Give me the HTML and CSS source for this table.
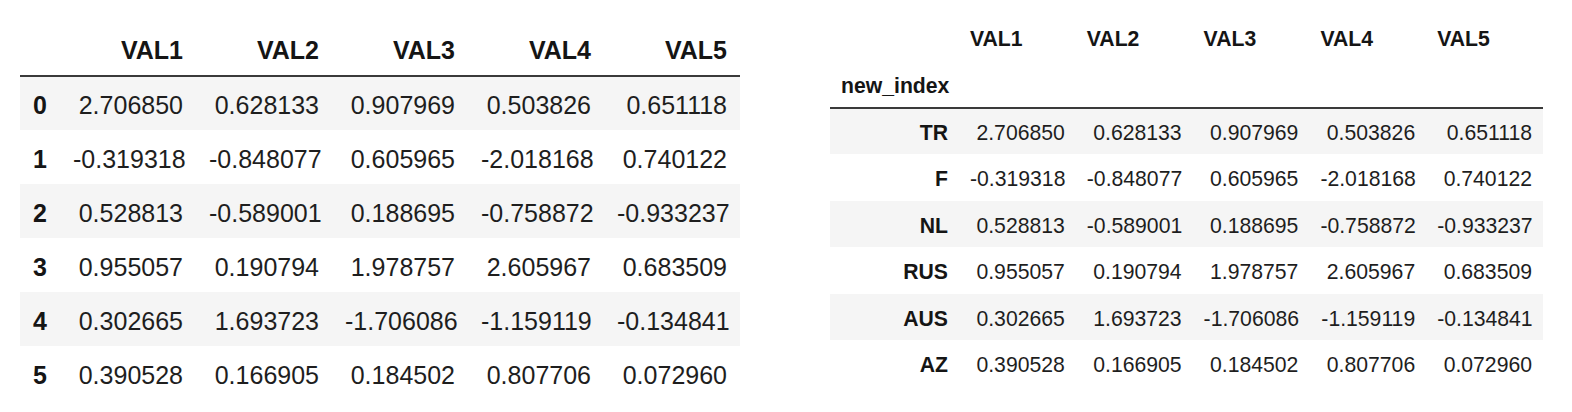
FILE: index.html
```html
<!DOCTYPE html>
<html>
<head>
<meta charset="utf-8">
<link rel="stylesheet" href="styles.css">
</head>
<body>
<div class="page">
  <table class="df df-left">
    <colgroup>
      <col class="c-idx"><col class="c-val"><col class="c-val"><col class="c-val"><col class="c-val"><col class="c-val">
    </colgroup>
    <thead>
      <tr><th></th><th>VAL1</th><th>VAL2</th><th>VAL3</th><th>VAL4</th><th>VAL5</th></tr>
    </thead>
    <tbody>
      <tr><th>0</th><td>2.706850</td><td>0.628133</td><td>0.907969</td><td>0.503826</td><td>0.651118</td></tr>
      <tr><th>1</th><td>-0.319318</td><td>-0.848077</td><td>0.605965</td><td>-2.018168</td><td>0.740122</td></tr>
      <tr><th>2</th><td>0.528813</td><td>-0.589001</td><td>0.188695</td><td>-0.758872</td><td>-0.933237</td></tr>
      <tr><th>3</th><td>0.955057</td><td>0.190794</td><td>1.978757</td><td>2.605967</td><td>0.683509</td></tr>
      <tr><th>4</th><td>0.302665</td><td>1.693723</td><td>-1.706086</td><td>-1.159119</td><td>-0.134841</td></tr>
      <tr><th>5</th><td>0.390528</td><td>0.166905</td><td>0.184502</td><td>0.807706</td><td>0.072960</td></tr>
    </tbody>
  </table>

  <table class="df df-right">
    <colgroup>
      <col class="c-idx"><col class="c-val"><col class="c-val"><col class="c-val"><col class="c-val"><col class="c-val">
    </colgroup>
    <thead>
      <tr><th></th><th>VAL1</th><th>VAL2</th><th>VAL3</th><th>VAL4</th><th>VAL5</th></tr>
      <tr class="name-row"><th>new_index</th><th></th><th></th><th></th><th></th><th></th></tr>
    </thead>
    <tbody>
      <tr><th>TR</th><td>2.706850</td><td>0.628133</td><td>0.907969</td><td>0.503826</td><td>0.651118</td></tr>
      <tr><th>F</th><td>-0.319318</td><td>-0.848077</td><td>0.605965</td><td>-2.018168</td><td>0.740122</td></tr>
      <tr><th>NL</th><td>0.528813</td><td>-0.589001</td><td>0.188695</td><td>-0.758872</td><td>-0.933237</td></tr>
      <tr><th>RUS</th><td>0.955057</td><td>0.190794</td><td>1.978757</td><td>2.605967</td><td>0.683509</td></tr>
      <tr><th>AUS</th><td>0.302665</td><td>1.693723</td><td>-1.706086</td><td>-1.159119</td><td>-0.134841</td></tr>
      <tr><th>AZ</th><td>0.390528</td><td>0.166905</td><td>0.184502</td><td>0.807706</td><td>0.072960</td></tr>
    </tbody>
  </table>
</div>
</body>
</html>
```

FILE: styles.css
```css
html, body {
  margin: 0;
  padding: 0;
  background: #ffffff;
}

.page {
  display: flex;
  align-items: flex-start;
  gap: 90px;
  padding-left: 20px;
  font-family: "Liberation Sans", Arial, sans-serif;
  color: #1e1e1e;
}

.df {
  border-collapse: collapse;
  border-spacing: 0;
  table-layout: fixed;
}

.df th,
.df td {
  text-align: right;
  vertical-align: middle;
  white-space: nowrap;
  padding-top: 0;
  padding-bottom: 0;
  line-height: normal;
}

.df th {
  font-weight: bold;
  color: #151515;
}

.df td {
  font-weight: normal;
}

.df tbody tr:nth-child(odd) {
  background: #f5f5f5;
}

/* ---- left table ---- */
.df-left {
  margin-top: 23px;
  width: 720px;
  font-size: 25px;
}

.df-left .c-idx { width: 40px; }
.df-left .c-val { width: 136px; }

.df-left th,
.df-left td {
  padding-left: 13px;
  padding-right: 13px;
}

.df-left thead tr {
  height: 53px;
  border-bottom: 2px solid #3a3a3a;
}

.df-left thead th {
  padding-top: 3px;
}

.df-left tbody tr {
  height: 54px;
}

.df-left tbody th,
.df-left tbody td {
  padding-top: 4px;
}

/* ---- right table ---- */
.df-right {
  margin-top: 15px;
  width: 713px;
  font-size: 21.2px;
}

.df-right .c-idx { width: 129px; }
.df-right .c-val { width: 116.8px; }

.df-right th,
.df-right td {
  padding-left: 11px;
  padding-right: 11px;
}

.df-right thead th {
  text-align: left;
}

.df-right thead tr {
  height: 47px;
}

.df-right thead tr.name-row {
  height: 46px;
  border-bottom: 2px solid #3a3a3a;
}

.df-right thead tr.name-row th {
  padding-top: 2px;
}

.df-right tbody tr {
  height: 46px;
}

.df-right tbody tr:nth-child(even) {
  height: 47px;
}

.df-right tbody th,
.df-right tbody td {
  padding-top: 3px;
}
```
